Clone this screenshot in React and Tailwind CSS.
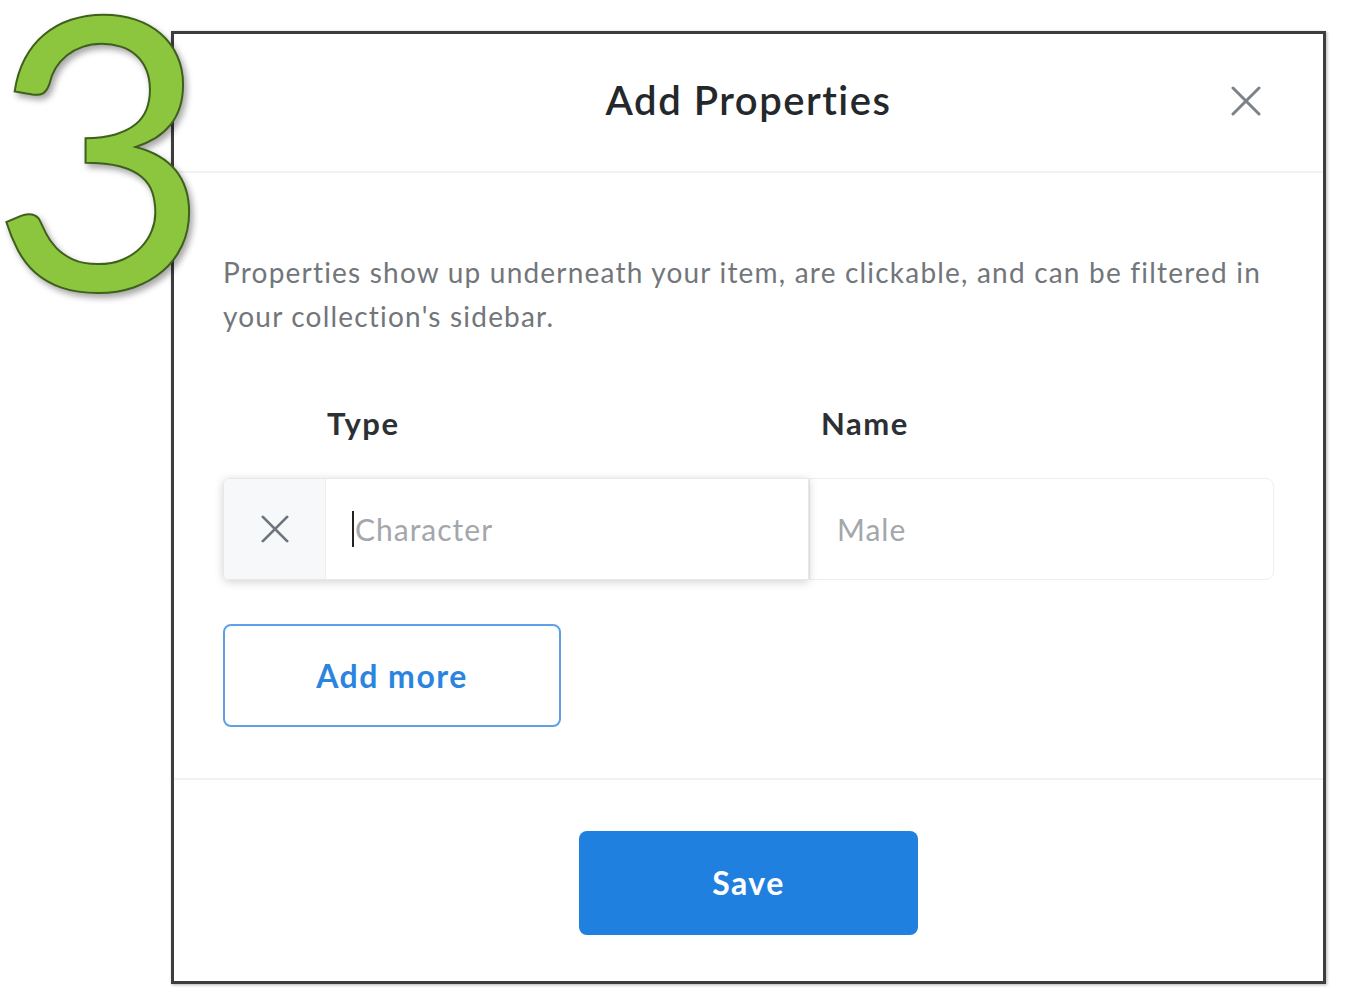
import React from 'react';

const Cross = ({ size, className }) => (
  <svg width={size} height={size} viewBox="0 0 30 30" className={className} fill="none">
    <path d="M2 2L28 28M28 2L2 28" stroke="currentColor" strokeWidth="3" strokeLinecap="round" />
  </svg>
);

export default function App() {
  return (
    <div className="relative min-h-[1000px] w-[1348px] bg-white font-['Lato',sans-serif]">
      {/* big step number over the dialog */}
      <div className="absolute left-[-10px] top-[-47px] z-10 select-none text-[380px] leading-none text-[#8cc63f] [-webkit-text-stroke:2px_#3f5f1c] drop-shadow-[3px_4px_3px_rgba(0,0,0,0.35)]">
        3
      </div>

      <div className="pl-[171px] pt-[31px]">
        <div className="flex h-[953px] w-[1155px] flex-col border-[3px] border-[#3d3d3d] bg-white shadow-[1px_1px_3px_rgba(0,0,0,0.3)]">
          {/* header */}
          <div className="relative h-[139px] shrink-0 border-b-2 border-[#f1f2f3]">
            <h1 className="pt-[42px] text-center text-[40px] font-semibold leading-[48px] tracking-[1.5px] text-[#25282b]">
              Add Properties
            </h1>
            <button className="absolute right-[62px] top-[52px] text-[#7b8288]">
              <Cross size={30} />
            </button>
          </div>

          {/* body */}
          <div className="px-[49px] pb-[51px] pt-[77px]">
            <p className="text-[28px] leading-[44px] tracking-[1.2px] text-[#72767b]">
              Properties show up underneath your item, are clickable, and can be filtered in your collection's sidebar.
            </p>

            <div className="mt-[67px] flex">
              <div className="w-[586px] pl-[104px] text-[31px] font-bold leading-[36px] tracking-[1.5px] text-[#2c3034]">Type</div>
              <div className="pl-[12px] text-[31px] font-bold leading-[36px] tracking-[1.5px] text-[#2c3034]">Name</div>
            </div>

            <div className="mt-[37px] flex h-[102px]">
              <div className="relative z-[1] flex w-[586px] rounded-l-[6px] border border-[#e6e8ea] shadow-[0_2px_10px_rgba(0,0,0,0.18)]">
                <div className="flex w-[102px] items-center justify-center rounded-l-[6px] border-r border-[#eceef0] bg-[#f7f8fa] text-[#6e757c]">
                  <Cross size={28} />
                </div>
                <div className="flex flex-1 items-center bg-white pl-[26px]">
                  <span className="mr-px h-[36px] w-[2px] bg-[#222]"></span>
                  <span className="text-[30px] tracking-[1px] text-[#a3a7ab]">Character</span>
                </div>
              </div>
              <div className="flex flex-1 items-center rounded-r-[8px] border border-[#eceef0] bg-white pl-[27px]">
                <span className="text-[30px] tracking-[1px] text-[#a3a7ab]">Male</span>
              </div>
            </div>

            <button className="mt-[44px] flex h-[103px] w-[338px] items-center justify-center rounded-[8px] border-2 border-[#5ea0ea] bg-white text-[32px] font-bold tracking-[1.5px] text-[#2b84e0]">
              Add more
            </button>
          </div>

          {/* footer */}
          <div className="flex flex-1 justify-center border-t-2 border-[#f1f2f3] pt-[51px]">
            <button className="h-[104px] w-[339px] rounded-[8px] bg-[#1f80e0] text-[32px] font-bold tracking-[1.5px] text-white">
              Save
            </button>
          </div>
        </div>
      </div>
    </div>
  );
}
